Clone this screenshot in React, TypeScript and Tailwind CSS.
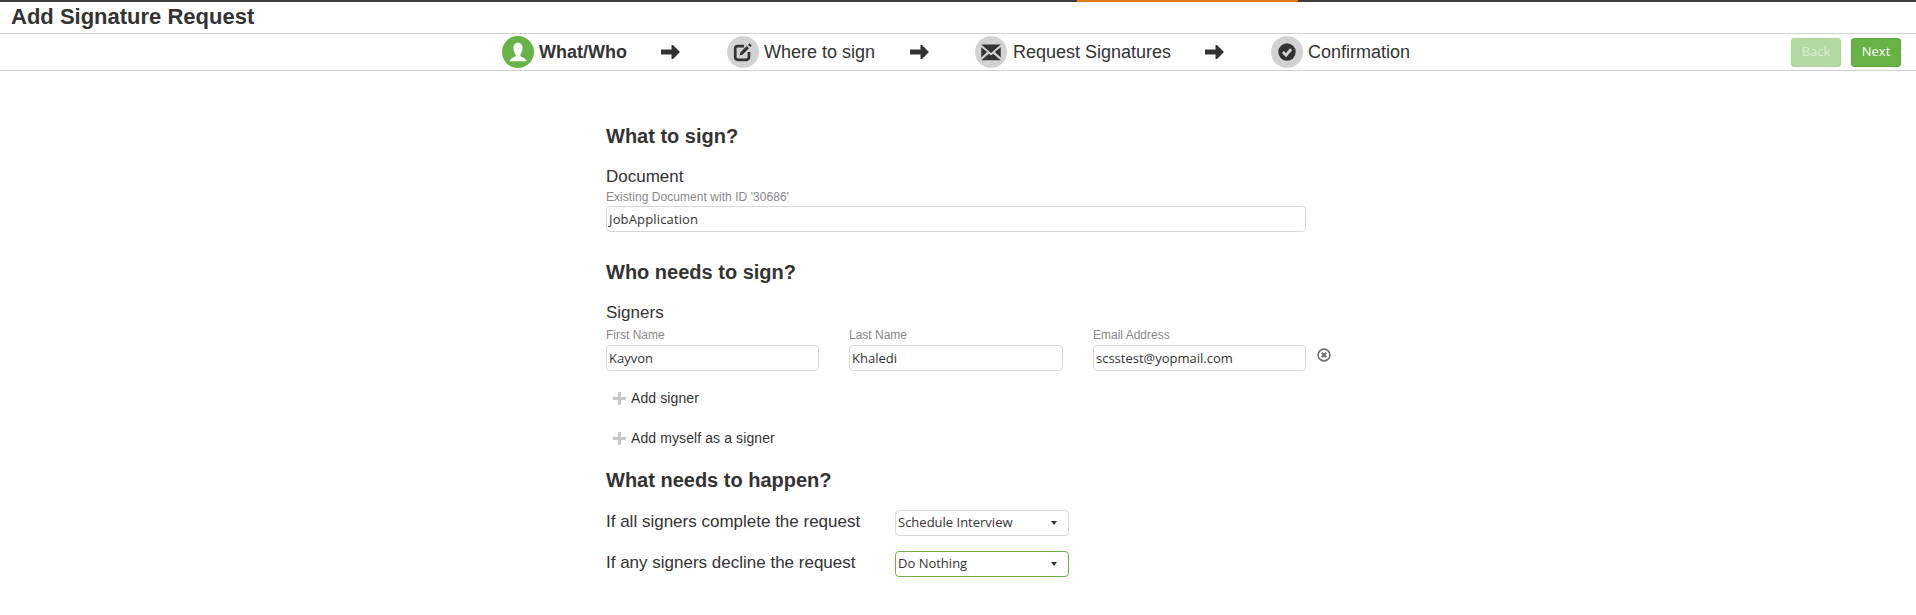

const Arrow = ({ className }: { className: string }) => (
  <svg viewBox="0 0 19 14" className={className} width="19" height="14">
    <path d="M0 4.5H10.5V0H12L19 7L12 14H10.5V9.5H0Z" fill="#333333" />
  </svg>
);

const Circle = ({ active, children }: { active?: boolean; children: React.ReactNode }) => (
  <div className={`flex h-8 w-8 shrink-0 items-center justify-center rounded-full ${active ? "bg-[#67b346]" : "bg-[#d2d2d2]"}`}>
    {children}
  </div>
);

const Plus = () => (
  <svg viewBox="0 0 13 13" width="13" height="13" className="shrink-0">
    <path d="M5 0H8V5H13V8H8V13H5V8H0V5H5Z" fill="#c8c8c8" />
  </svg>
);

const Field = ({ label, value, className, labelClass, valueClass }: { label: string; value: string; className: string; labelClass: string; valueClass: string }) => (
  <div className={className}>
    <div className={`text-[12px] text-[#888888] ${labelClass}`}>{label}</div>
    <div className={`h-[26px] rounded-[4px] border border-[#d9d9d9] pl-[2px] font-['Open_Sans',sans-serif] text-[13px] leading-[24px] text-[#333333] ${valueClass}`}>{value}</div>
  </div>
);

const Select = ({ value, focus }: { value: string; focus?: boolean }) => (
  <div className={`flex h-[26px] w-[174px] items-center justify-between rounded-[4px] border pl-[2px] pr-[11px] font-['Open_Sans',sans-serif] text-[13px] text-[#333333] ${focus ? "border-[#67b346]" : "border-[#d9d9d9]"}`}>
    <span>{value}</span>
    <span className="h-0 w-0 border-x-[3.5px] border-t-[4px] border-x-transparent border-t-[#333333]" />
  </div>
);

const Heading = ({ children, className }: { children: React.ReactNode; className: string }) => (
  <h2 className={`text-[20px] font-bold leading-[24px] text-[#333333] ${className}`}>{children}</h2>
);

export default function App() {
  return (
    <div className="h-[615px] w-[1916px] overflow-hidden bg-white font-['Liberation_Sans',Arial,sans-serif] text-[#333333]">
      <div className="flex h-[2px] bg-[#3c3c3c]">
        <div className="ml-[1077px] w-[221px] bg-[#e07b10]" />
      </div>
      <div className="h-[32px] border-b border-[#d2d2d2] pl-[11px]">
        <h1 className="text-[22px] font-bold leading-[30px]">Add Signature Request</h1>
      </div>
      <div className="flex h-[37px] items-center border-b border-[#d2d2d2] pl-[502px] pr-[15px]">
        <Circle active>
          <svg viewBox="0 0 24 24" width="26" height="26">
            <path d="M12 3.5C9 3.5 7.6 5.8 7.8 8.8C8 11.3 8.8 13 9.8 14.2V15.8C9 17 5 17.6 4 20.5H20C19 17.6 15 17 14.2 15.8V14.2C15.2 13 16 11.3 16.2 8.8C16.4 5.8 15 3.5 12 3.5Z" fill="#ffffff" />
          </svg>
        </Circle>
        <span className="ml-[5px] w-[122px] text-[18px] font-bold">What/Who</span>
        <Arrow className="shrink-0" />
        <div className="ml-[47px]">
          <Circle>
            <svg viewBox="0 0 24 24" width="22" height="22">
              <path d="M13 5.5H6.5C4.5 5.5 3.5 6.5 3.5 8.5V17.5C3.5 19.5 4.5 20.5 6.5 20.5H15.5C17.5 20.5 18.5 19.5 18.5 17.5V12" fill="none" stroke="#333333" strokeWidth="3" />
              <path d="M9 12.5L16 5.5L18.5 8L11.5 15L8.5 15.5Z" fill="#333333" />
              <path d="M17.5 4L19 2.5L21.5 5L20 6.5Z" fill="#333333" />
            </svg>
          </Circle>
        </div>
        <span className="ml-[5px] w-[146px] text-[18px]">Where to sign</span>
        <Arrow className="shrink-0" />
        <div className="ml-[46px]">
          <Circle>
            <svg viewBox="0 0 24 24" width="26" height="26">
              <path d="M3 5H21L12 13Z" fill="#333333" />
              <path d="M3 7.5L8.5 12L3 17Z" fill="#333333" />
              <path d="M21 7.5L15.5 12L21 17Z" fill="#333333" />
              <path d="M3 19.5L10 13.5L12 15.2L14 13.5L21 19.5Z" fill="#333333" />
            </svg>
          </Circle>
        </div>
        <span className="ml-[6px] w-[192px] text-[18px]">Request Signatures</span>
        <Arrow className="shrink-0" />
        <div className="ml-[47px]">
          <Circle>
            <svg viewBox="0 0 24 24" width="22" height="22">
              <circle cx="12" cy="12" r="9.5" fill="#333333" />
              <path d="M7.5 12L11 15.5L16.5 9" fill="none" stroke="#d2d2d2" strokeWidth="3" />
            </svg>
          </Circle>
        </div>
        <span className="ml-[5px] text-[18px]">Confirmation</span>
        <div className="ml-auto flex gap-[10px] font-['Open_Sans',sans-serif] text-[13px] text-white">
          <button className="h-[29px] w-[50px] rounded-[3px] border border-[#a9d598] bg-[#b3d9a3] text-[#dcecd4]">Back</button>
          <button className="h-[29px] w-[50px] rounded-[3px] border border-[#5ea53f] bg-[#67b346]">Next</button>
        </div>
      </div>

      <main className="ml-[606px] w-[740px] pt-[53px]">
        <Heading className="h-[24px]">What to sign?</Heading>
        <div className="mt-[17px] text-[17px] leading-[24px]">Document</div>
        <Field className="w-[700px]" labelClass="h-[17px] leading-[17px] tracking-[0.05px]" valueClass="tracking-[0.15px]" label="Existing Document with ID '30686'" value="JobApplication" />
        <Heading className="mt-[28px]">Who needs to sign?</Heading>
        <div className="mt-[17px] text-[17px] leading-[24px]">Signers</div>
        <div className="flex items-start">
          <Field className="w-[213px]" labelClass="h-[20px] leading-[21px]" valueClass="" label="First Name" value="Kayvon" />
          <Field className="ml-[30px] w-[214px]" labelClass="h-[20px] leading-[21px]" valueClass="" label="Last Name" value="Khaledi" />
          <Field className="ml-[30px] w-[213px]" labelClass="h-[20px] leading-[21px]" valueClass="" label="Email Address" value="scsstest@yopmail.com" />
          <svg viewBox="0 0 14 14" width="14" height="14" className="ml-[11px] mt-[23px] shrink-0">
            <circle cx="7" cy="7" r="5.9" fill="none" stroke="#6f6f6f" strokeWidth="1.6" />
            <path d="M4.7 4.7L9.3 9.3M9.3 4.7L4.7 9.3" stroke="#6f6f6f" strokeWidth="2" />
          </svg>
        </div>
        <div className="ml-[7px] mt-[17px] flex h-[20px] items-center gap-[5px] text-[14px] tracking-[0.1px]"><Plus />Add signer</div>
        <div className="ml-[7px] mt-[20px] flex h-[20px] items-center gap-[5px] text-[14px] tracking-[0.1px]"><Plus />Add myself as a signer</div>
        <Heading className="mt-[20px]">What needs to happen?</Heading>
        <div className="mt-[18px] flex h-[26px] w-[463px] items-center justify-between">
          <span className="-mt-[3px] text-[17px]">If all signers complete the request</span>
          <Select value="Schedule Interview" />
        </div>
        <div className="mt-[15px] flex h-[26px] w-[463px] items-center justify-between">
          <span className="-mt-[3px] text-[17px]">If any signers decline the request</span>
          <Select value="Do Nothing" focus />
        </div>
      </main>
    </div>
  );
}
